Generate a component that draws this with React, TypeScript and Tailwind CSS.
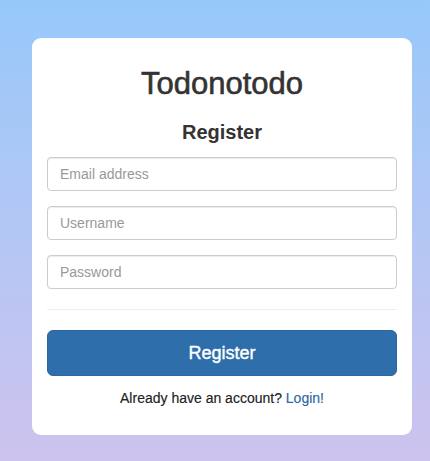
import { useState } from "react";

export default function App() {
  const [email, setEmail] = useState("");
  const [username, setUsername] = useState("");
  const [password, setPassword] = useState("");

  const inputClass =
    "block w-full h-[34px] px-3 text-[14px] text-[#555] bg-white border border-[#ccc] rounded-[4px] shadow-[inset_0_1px_1px_rgba(0,0,0,0.075)] placeholder:text-[#999] focus:outline-none focus:border-[#66afe9]";

  return (
    <div
      className="min-h-[461px] w-full bg-gradient-to-b from-[#96c9fa] to-[#cdc3ee] pt-[38px] pb-[26px] text-[#333]"
      style={{ fontFamily: '"Liberation Sans", Arial, sans-serif' }}
    >
      <div className="ml-[32px] w-[380px] bg-white rounded-[9px] px-[15px] pt-[30px] pb-[27px]">
        <h1 className="text-center text-[31px] leading-none font-normal text-[#333] [-webkit-text-stroke:0.6px_#333]">
          Todonotodo
        </h1>
        <h2 className="mt-[23px] text-center text-[20px] leading-none font-bold text-[#333]">
          Register
        </h2>

        <form
          className="mt-[15px] flex flex-col"
          onSubmit={(e) => {
            e.preventDefault();
          }}
        >
          <div className="flex flex-col gap-[15px]">
            <input
              type="email"
              className={inputClass}
              placeholder="Email address"
              value={email}
              onChange={(e) => setEmail(e.target.value)}
            />
            <input
              type="text"
              className={inputClass}
              placeholder="Username"
              value={username}
              onChange={(e) => setUsername(e.target.value)}
            />
            <input
              type="password"
              className={inputClass}
              placeholder="Password"
              value={password}
              onChange={(e) => setPassword(e.target.value)}
            />
          </div>

          <hr className="mt-[20px] border-0 border-t border-[#eee]" />

          <button
            type="submit"
            className="mt-[20px] h-[46px] w-full rounded-[6px] bg-[#2d6eab] border border-[#2a66a0] text-white text-[18px] [-webkit-text-stroke:0.4px_white]"
          >
            Register
          </button>
        </form>

        <p className="mt-3 text-center text-[14px] leading-5 text-[#222] [-webkit-text-stroke:0.15px_#222]">
          Already have an account?{" "}
          <a href="#" className="text-[#2c67a6] [-webkit-text-stroke:0.15px_#2c67a6] hover:underline">
            Login!
          </a>
        </p>
      </div>
    </div>
  );
}
